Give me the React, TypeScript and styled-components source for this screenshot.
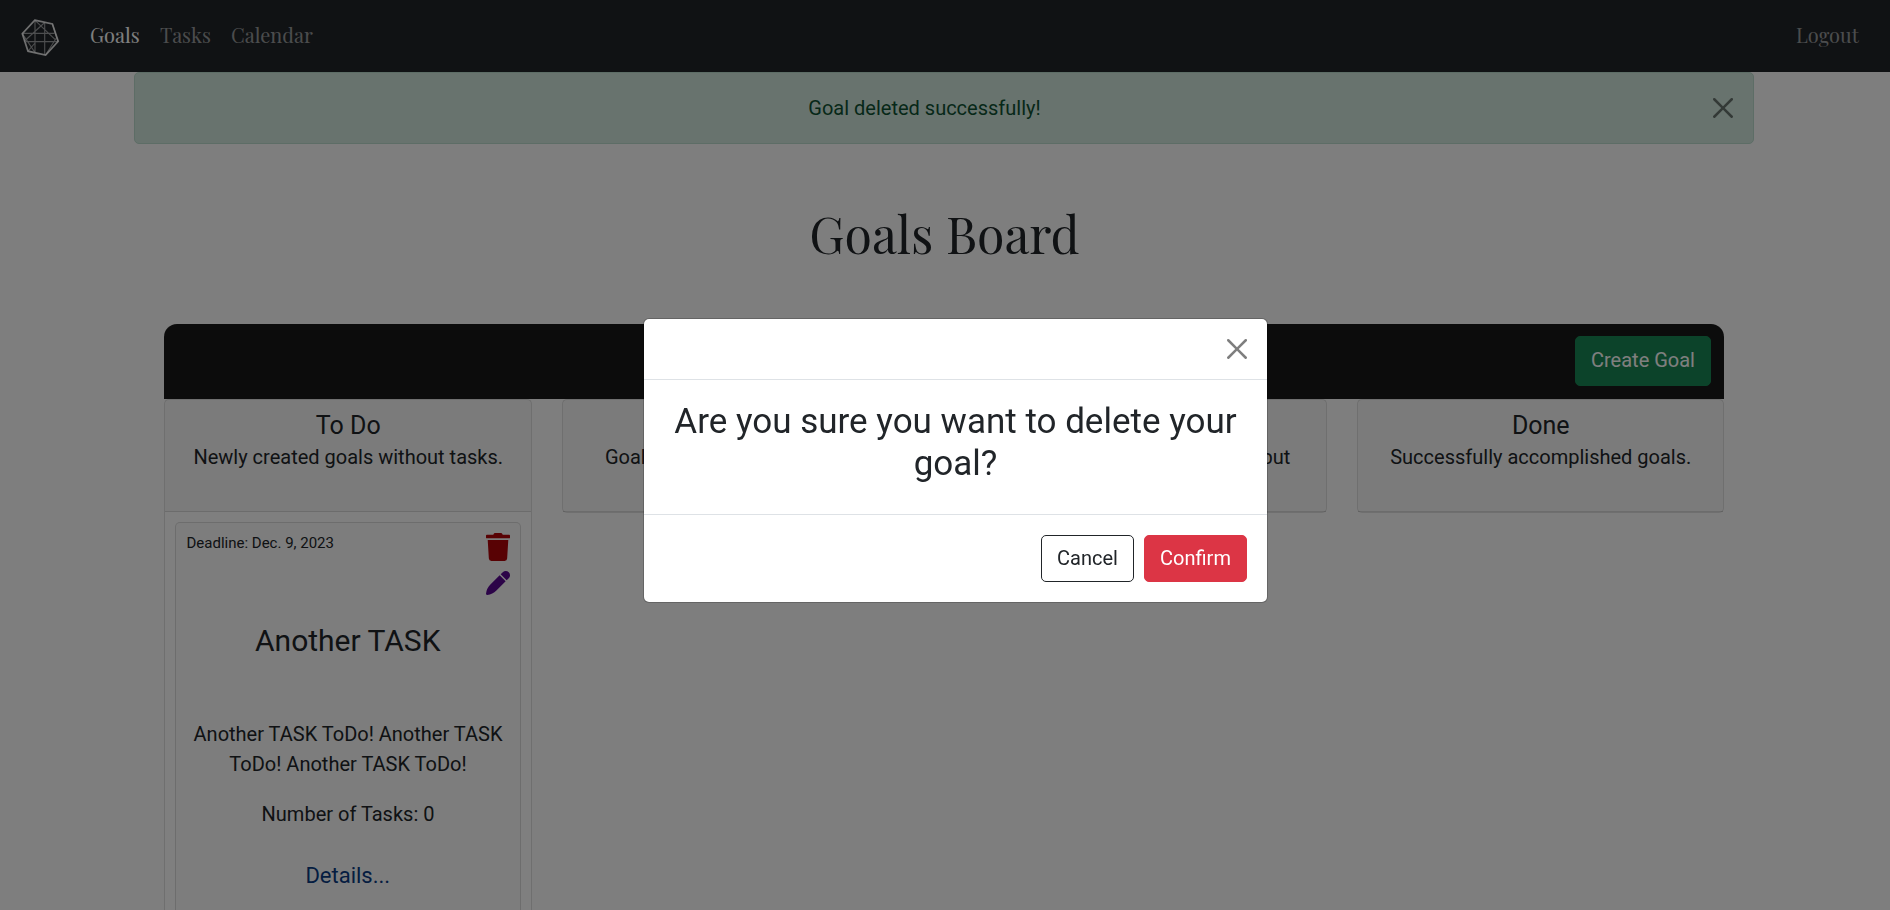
import React from "react";
import styled, { createGlobalStyle } from "styled-components";

const Global = createGlobalStyle`
  *, *::before, *::after { box-sizing: border-box; }
  html { font-size: 20px; }
  body {
    margin: 0;
    height: 910px;
    overflow: hidden;
    background: #fcfcfc;
    color: #212529;
    font-family: Roboto, "Liberation Sans", sans-serif;
    font-size: 20px;
    line-height: 30px;
  }
  h1, h2, h3, h5, p { margin: 0; font-weight: 400; }
`;

const Page = styled.div`
  height: 910px;
  overflow: hidden;
`;

const Navbar = styled.nav`
  display: flex;
  align-items: center;
  height: 72px;
  padding: 0 31px 0 20px;
  background: #212529;
  font-family: "Playfair Display", "Liberation Serif", serif;
  font-size: 20px;
`;

const NavLinks = styled.div`
  display: flex;
  flex: 1;
  gap: 20px;
  margin-left: 30px;
`;

const NavLink = styled.a<{ $active?: boolean; $width: number }>`
  width: ${(p) => p.$width}px;
  padding-bottom: 2px;
  white-space: nowrap;
  color: ${(p) => (p.$active ? "#fff" : "rgba(255, 255, 255, 0.55)")};
`;

const Alert = styled.div`
  display: flex;
  align-items: center;
  width: 1620px;
  height: 72px;
  margin-left: 134px;
  padding: 0 20px 0 20px;
  border: 1px solid #badbcc;
  border-radius: 5px;
  background: #d1e7dd;
  color: #0f5132;
`;

const AlertText = styled.p`
  flex: 1;
  padding-right: 19px;
  text-align: center;
`;

const CloseButton = styled.button`
  display: flex;
  padding: 0;
  border: 0;
  background: none;
  opacity: 0.5;
`;

const Title = styled.h1`
  width: 1889px;
  margin-top: 60px;
  font-family: "Playfair Display", "Liberation Serif", serif;
  font-size: 50px;
  line-height: 60px;
  text-align: center;
`;

const Board = styled.main`
  width: 1560px;
  margin: 60px 0 0 164px;
`;

const BoardBar = styled.div`
  display: flex;
  justify-content: flex-end;
  height: 75px;
  padding: 12px 13px;
  border-radius: 13px 13px 0 0;
  background: #181818;
`;

const Button = styled.button<{ $kind: "success" | "danger" | "outline"; $width: number; $height: number }>`
  width: ${(p) => p.$width}px;
  height: ${(p) => p.$height}px;
  padding: 0 0 2px;
  border: 1px solid
    ${(p) => ({ success: "#198754", danger: "#dc3545", outline: "#212529" })[p.$kind]};
  border-radius: 5px;
  background: ${(p) => ({ success: "#198754", danger: "#dc3545", outline: "#fff" })[p.$kind]};
  color: ${(p) => (p.$kind === "outline" ? "#212529" : "#fff")};
  font: 400 20px/30px Roboto, "Liberation Sans", sans-serif;
`;

const Columns = styled.div`
  display: grid;
  grid-template-columns: repeat(4, 1fr);
  align-items: start;
  gap: 30px;
`;

const Column = styled.section`
  border: 1px solid rgba(0, 0, 0, 0.125);
  border-radius: 5px;
  background: #fff;
`;

const ColumnHeader = styled.header`
  height: 112px;
  padding: 11px 20px 10px 21px;
  border-bottom: 1px solid rgba(0, 0, 0, 0.125);
  background: rgba(0, 0, 0, 0.03);
  text-align: center;
  white-space: pre-line;
`;

const ColumnTitle = styled.h5`
  margin-bottom: 1px;
  font-size: 25px;
  line-height: 30px;
`;

const GoalCard = styled.article`
  height: 420px;
  margin: 10px;
  padding: 10px;
  border: 1px solid rgba(0, 0, 0, 0.125);
  border-radius: 5px;
  background: #fafafa;
  text-align: center;
`;

const GoalTop = styled.div`
  display: flex;
  justify-content: space-between;
  height: 70px;
`;

const Deadline = styled.span`
  padding-left: 0.5px;
  font-size: 15px;
  line-height: 20px;
`;

const GoalActions = styled.div`
  display: flex;
  flex-direction: column;
  gap: 10px;
  svg { display: block; }
`;

const GoalTitle = styled.h3`
  margin: 20px 0 60px;
  font-size: 30px;
  line-height: 36px;
`;

const GoalText = styled.p`
  margin-bottom: 20px;
  padding-left: 0.5px;
`;

const Details = styled.a`
  display: block;
  margin-top: 32px;
  color: #0a3b82;
  font-size: 22px;
`;

const Backdrop = styled.div`
  position: fixed;
  inset: 0;
  padding: 318px 0 0 643px;
  background: rgba(0, 0, 0, 0.5);
`;

const Dialog = styled.div`
  width: 625px;
  height: 285px;
  border: 1px solid rgba(0, 0, 0, 0.2);
  border-radius: 6px;
  background: #fff;
  background-clip: padding-box;
`;

const DialogHeader = styled.div`
  display: flex;
  justify-content: flex-end;
  height: 61px;
  padding: 20px;
  border-bottom: 1px solid #dee2e6;
`;

const DialogBody = styled.div`
  height: 134px;
  padding: 21px 20px 20px;
  text-align: center;
`;

const Question = styled.h3`
  font-size: 35px;
  line-height: 42px;
`;

const DialogFooter = styled.div`
  display: flex;
  justify-content: flex-end;
  gap: 10px;
  padding: 20px;
  border-top: 1px solid #dee2e6;
`;

const CloseIcon = () => (
  <svg width="20" height="20" viewBox="0 0 16 16" fill="#000">
    <path d="M.293.293a1 1 0 0 1 1.414 0L8 6.586 14.293.293a1 1 0 1 1 1.414 1.414L9.414 8l6.293 6.293a1 1 0 0 1-1.414 1.414L8 9.414l-6.293 6.293a1 1 0 0 1-1.414-1.414L6.586 8 .293 1.707a1 1 0 0 1 0-1.414z" />
  </svg>
);

const Logo = () => (
  <svg width="40" height="40" viewBox="0 0 40 40" fill="none" stroke="#fff">
    <path d="M14.8 4.2 32.4 8 38.2 25.4 25.6 39 8 35.2 2.3 17.6Z" strokeWidth="1.7" opacity=".85" />
    <path
      d="M2.3 17.4H34.5M6 25.6H38M15 4.5V36.5M24.7 6.5V38.5M14.8 4.2 35 23.3M24.7 6.5 4 25.5M32.4 8 38 25.4M2.3 17.6 15 36.5M8 35.2 15 27M25.6 39 36 22.5"
      strokeWidth="1.1"
      opacity=".55"
    />
  </svg>
);

const TrashIcon = () => (
  <svg width="24" height="28" viewBox="0 0 448 512" preserveAspectRatio="none" fill="#b00408">
    <path d="M432 32H312l-9.4-18.7A24 24 0 0 0 281.1 0H166.8a23.7 23.7 0 0 0-21.4 13.3L136 32H16A16 16 0 0 0 0 48v32a16 16 0 0 0 16 16h416a16 16 0 0 0 16-16V48a16 16 0 0 0-16-16zM53.2 467a48 48 0 0 0 47.9 45h245.8a48 48 0 0 0 47.9-45L416 128H32z" />
  </svg>
);

const PencilIcon = () => (
  <svg width="24" height="24" viewBox="0 0 512 512" fill="#580890">
    <path d="M93.9 290A327 327 0 0 0 .2 485.1c-1.7 15.5 11.2 28.4 26.5 26.7A327 327 0 0 0 222 418l196.8-196.7-128-128zM485.5 26.5c-35.4-35.3-92.7-35.3-128 0l-44.1 44.1 128 128 44.1-44.1c35.4-35.3 35.4-92.6 0-128z" />
  </svg>
);

const columns = [
  { title: "To Do", text: "Newly created goals without tasks." },
  { title: "In Progress", text: "Goals with all tasks in progress." },
  { title: "Completed", text: "Goals with all tasks achieved, but\nnot confirmed." },
  { title: "Done", text: "Successfully accomplished goals." },
];

export default function App() {
  return (
    <Page>
      <Global />
      <Navbar>
        <Logo />
        <NavLinks>
          <NavLink $active $width={50}>Goals</NavLink>
          <NavLink $width={51}>Tasks</NavLink>
          <NavLink $width={82}>Calendar</NavLink>
        </NavLinks>
        <NavLink $width={63}>Logout</NavLink>
      </Navbar>
      <Alert>
        <AlertText>Goal deleted successfully!</AlertText>
        <CloseButton aria-label="Close"><CloseIcon /></CloseButton>
      </Alert>
      <Title>Goals Board</Title>
      <Board>
        <BoardBar>
          <Button $kind="success" $width={136} $height={50}>Create Goal</Button>
        </BoardBar>
        <Columns>
          {columns.map((column, index) => (
            <Column key={column.title}>
              <ColumnHeader>
                <ColumnTitle>{column.title}</ColumnTitle>
                <p>{column.text}</p>
              </ColumnHeader>
              {index === 0 && (
                <GoalCard>
                  <GoalTop>
                    <Deadline>Deadline: Dec. 9, 2023</Deadline>
                    <GoalActions>
                      <TrashIcon />
                      <PencilIcon />
                    </GoalActions>
                  </GoalTop>
                  <GoalTitle>Another TASK</GoalTitle>
                  <GoalText>Another TASK ToDo! Another TASK ToDo! Another TASK ToDo!</GoalText>
                  <GoalText>Number of Tasks: 0</GoalText>
                  <Details>Details...</Details>
                </GoalCard>
              )}
            </Column>
          ))}
        </Columns>
      </Board>
      <Backdrop>
        <Dialog role="dialog">
          <DialogHeader>
            <CloseButton aria-label="Close"><CloseIcon /></CloseButton>
          </DialogHeader>
          <DialogBody>
            <Question>Are you sure you want to delete your goal?</Question>
          </DialogBody>
          <DialogFooter>
            <Button $kind="outline" $width={93} $height={47}>Cancel</Button>
            <Button $kind="danger" $width={103} $height={47}>Confirm</Button>
          </DialogFooter>
        </Dialog>
      </Backdrop>
    </Page>
  );
}
